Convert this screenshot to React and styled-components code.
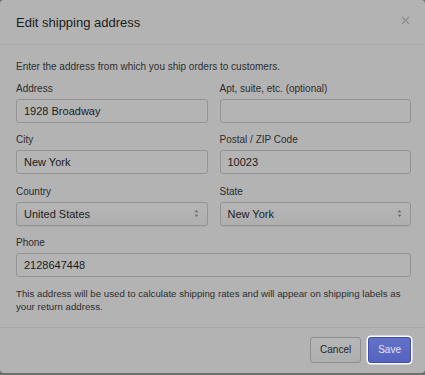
import React from "react";
import styled, { createGlobalStyle } from "styled-components";

const GlobalStyle = createGlobalStyle`
  html, body {
    margin: 0;
    padding: 0;
    background: #6f6f6f;
  }
  * {
    box-sizing: border-box;
  }
`;

const Modal = styled.div`
  width: 425px;
  height: 373px;
  background: #b3b3b3;
  border-radius: 4px;
  display: flex;
  flex-direction: column;
  font-family: "Liberation Sans", Arial, sans-serif;
  color: #1f1f1f;
  overflow: hidden;
`;

const Header = styled.div`
  height: 45px;
  display: flex;
  align-items: center;
  justify-content: space-between;
  padding: 0 14px 0 16px;
  border-bottom: 1px solid #a8a8a8;
`;

const Title = styled.h2`
  margin: 0;
  font-size: 13px;
  font-weight: 400;
  color: #1c1c1c;
`;

const Close = styled.button`
  border: none;
  background: none;
  padding: 0;
  width: 12px;
  height: 12px;
  display: flex;
  align-items: center;
  justify-content: center;
  margin-top: -3px;
`;

const Body = styled.div`
  flex: 1;
  padding: 15px 14px 0 16px;
  border-bottom: 1px solid #a8a8a8;
`;

const Text = styled.p`
  margin: ${(p) => p.$mt || 0}px 0 ${(p) => p.$mb || 0}px;
  font-size: ${(p) => p.$size || 10}px;
  line-height: ${(p) => p.$lh || 14}px;
  color: #2e2e2e;
`;

const Grid = styled.div`
  display: grid;
  grid-template-columns: 1fr 1fr;
  column-gap: 12px;
  row-gap: 10.4px;
`;

const Field = styled.div`
  display: flex;
  flex-direction: column;
  grid-column: ${(p) => (p.$full ? "1 / -1" : "auto")};
`;

const Label = styled.label`
  font-size: 10px;
  line-height: 14px;
  margin-bottom: 3px;
  color: #2c2c2c;
`;

const Input = styled.div`
  height: 24px;
  border: 1px solid #949494;
  border-radius: 3px;
  background: #b4b4b4;
  padding: 0 7px;
  display: flex;
  align-items: center;
  justify-content: space-between;
  font-size: 11px;
  color: #1c1c1c;
`;

const Select = styled(Input)`
  background: linear-gradient(#b5b5b5, #afafb0);
  box-shadow: 0 1px 0 rgba(0, 0, 0, 0.05);
  padding-right: 8px;
`;

const Footer = styled.div`
  height: 45px;
  display: flex;
  align-items: center;
  justify-content: flex-end;
  gap: 7px;
  padding: 0 14px 2px;
`;

const Button = styled.button`
  height: 26px;
  padding: 0 9px;
  border-radius: 3px;
  font-family: "Liberation Sans", Arial, sans-serif;
  font-size: 10px;
  border: 1px solid ${(p) => (p.$primary ? "#3f4eae" : "#8f8f8f")};
  background: ${(p) =>
    p.$primary ? "linear-gradient(#6371c7, #5563c1)" : "linear-gradient(#b6b6b6, #aeafb0)"};
  color: ${(p) => (p.$primary ? "#e4e6f6" : "#262626")};
  box-shadow: ${(p) => (p.$primary ? "0 0 0 1.5px #ffffff" : "none")};
`;

const Caret = () => (
  <svg width="5" height="9" viewBox="0 0 5 9">
    <path d="M2.5 1 L4.3 3.3 H0.7 Z M2.5 8 L4.3 5.7 H0.7 Z" fill="#666" />
  </svg>
);

export default function App() {
  return (
    <>
      <GlobalStyle />
      <Modal>
        <Header>
          <Title>Edit shipping address</Title>
          <Close>
            <svg width="9" height="9" viewBox="0 0 9 9">
              <path d="M1 1 L8 8 M8 1 L1 8" stroke="#8c8c8c" strokeWidth="1.1" />
            </svg>
          </Close>
        </Header>
        <Body>
          <Text $mb={8}>Enter the address from which you ship orders to customers.</Text>
          <Grid>
            <Field>
              <Label>Address</Label>
              <Input>1928 Broadway</Input>
            </Field>
            <Field>
              <Label>Apt, suite, etc. (optional)</Label>
              <Input />
            </Field>
            <Field>
              <Label>City</Label>
              <Input>New York</Input>
            </Field>
            <Field>
              <Label>Postal / ZIP Code</Label>
              <Input>10023</Input>
            </Field>
            <Field>
              <Label>Country</Label>
              <Select>
                United States
                <Caret />
              </Select>
            </Field>
            <Field>
              <Label>State</Label>
              <Select>
                New York
                <Caret />
              </Select>
            </Field>
            <Field $full>
              <Label>Phone</Label>
              <Input>2128647448</Input>
            </Field>
          </Grid>
          <Text $lh={13} $mt={10} $size={9.7}>
            This address will be used to calculate shipping rates and will appear on shipping labels as
            your return address.
          </Text>
        </Body>
        <Footer>
          <Button>Cancel</Button>
          <Button $primary>Save</Button>
        </Footer>
      </Modal>
    </>
  );
}
